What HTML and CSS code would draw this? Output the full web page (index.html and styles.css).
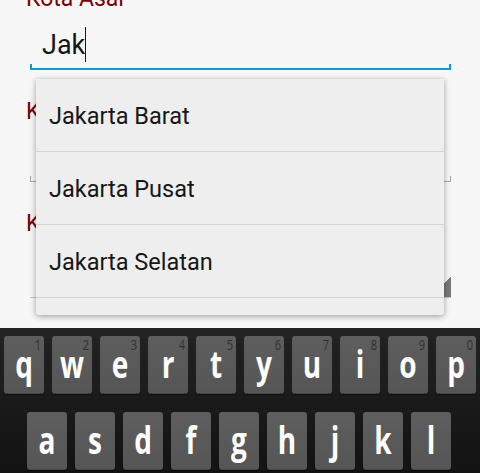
FILE: index.html
```html
<!DOCTYPE html>
<html>
<head>
<meta charset="utf-8">
<link rel="stylesheet" href="styles.css">
</head>
<body>
<div class="screen">
  <div class="form">
    <div class="field field-first">
      <div class="label">Kota Asal</div>
      <div class="input"><span class="value">Jak</span><span class="cursor"></span></div>
      <div class="line line-active"></div>
    </div>
    <div class="field">
      <div class="label">Kota Tujuan</div>
      <div class="input"></div>
      <div class="line"></div>
    </div>
    <div class="field">
      <div class="label">Kelas</div>
      <div class="spinner"></div>
    </div>
    <ul class="dropdown">
      <li class="item">Jakarta Barat</li>
      <li class="item">Jakarta Pusat</li>
      <li class="item">Jakarta Selatan</li>
      <li class="item">Jakarta Timur</li>
    </ul>
  </div>
  <div class="keyboard">
    <div class="row row-top">
      <div class="key"><span class="digit">1</span><span class="letter">q</span></div>
      <div class="key"><span class="digit">2</span><span class="letter">w</span></div>
      <div class="key"><span class="digit">3</span><span class="letter">e</span></div>
      <div class="key"><span class="digit">4</span><span class="letter">r</span></div>
      <div class="key"><span class="digit">5</span><span class="letter">t</span></div>
      <div class="key"><span class="digit">6</span><span class="letter">y</span></div>
      <div class="key"><span class="digit">7</span><span class="letter">u</span></div>
      <div class="key"><span class="digit">8</span><span class="letter">i</span></div>
      <div class="key"><span class="digit">9</span><span class="letter">o</span></div>
      <div class="key"><span class="digit">0</span><span class="letter">p</span></div>
    </div>
    <div class="row row-mid">
      <div class="key"><span class="digit"></span><span class="letter">a</span></div>
      <div class="key"><span class="digit"></span><span class="letter">s</span></div>
      <div class="key"><span class="digit"></span><span class="letter">d</span></div>
      <div class="key"><span class="digit"></span><span class="letter">f</span></div>
      <div class="key"><span class="digit"></span><span class="letter">g</span></div>
      <div class="key"><span class="digit"></span><span class="letter">h</span></div>
      <div class="key"><span class="digit"></span><span class="letter">j</span></div>
      <div class="key"><span class="digit"></span><span class="letter">k</span></div>
      <div class="key"><span class="digit"></span><span class="letter">l</span></div>
    </div>
  </div>
</div>
</body>
</html>
```
FILE: styles.css
```css
html, body {
  margin: 0;
  padding: 0;
  width: 480px;
  height: 473px;
  overflow: hidden;
  background: #f7f7f7;
}

.screen {
  display: flex;
  flex-direction: column;
  width: 480px;
  height: 473px;
}

.form {
  position: relative;
  flex: 1;
  overflow: hidden;
  padding: 0 29px 0 30px;
  font-family: Roboto, "Noto Sans", sans-serif;
}

.field {
  display: flex;
  flex-direction: column;
  margin-top: 28px;
}

.field-first {
  margin-top: -15px;
}

.label {
  margin-left: -4px;
  font-size: 23px;
  line-height: 27px;
  height: 27px;
  color: #7f0000;
  white-space: nowrap;
}

.field-first .input {
  margin-top: 14px;
}

.input {
  margin-top: 13px;
  height: 38px;
  padding-left: 12px;
  font-size: 27px;
  line-height: 38px;
  color: #151515;
  white-space: nowrap;
}

.cursor {
  display: inline-block;
  width: 1px;
  height: 35px;
  margin-top: 1px;
  vertical-align: top;
  background: #1a1a1a;
}

.line {
  box-sizing: border-box;
  height: 6px;
  border: 1px solid #a5a5a5;
  border-top: none;
}

.line-active {
  border: 2px solid #0a9bd0;
  border-top: none;
}

.spinner {
  height: 60px;
  border-bottom: 1px solid #c4c4c4;
  background: linear-gradient(to top left, #7a7a7a 50%, transparent 50%) no-repeat right bottom / 20px 20px;
}

.dropdown {
  position: absolute;
  left: 36px;
  top: 79px;
  width: 408px;
  height: 236px;
  margin: 0;
  padding: 0;
  list-style: none;
  overflow: hidden;
  background: #eeeeee;
  border-radius: 0 0 3px 3px;
  box-shadow: 0 2px 7px rgba(0, 0, 0, 0.28), 0 0 4px rgba(0, 0, 0, 0.12);
}

.item {
  height: 72px;
  overflow: hidden;
  padding-left: 13px;
  font-size: 23.5px;
  line-height: 74px;
  color: #161616;
  border-bottom: 1px solid #d4d4d4;
  white-space: nowrap;
}

.keyboard {
  flex: none;
  box-sizing: border-box;
  height: 145px;
  padding-top: 8px;
  display: flex;
  flex-direction: column;
  gap: 18px;
  background: linear-gradient(#232323, #121212);
  font-family: "Open Sans", "DejaVu Sans", sans-serif;
}

.row {
  display: flex;
  gap: 8px;
}

.row-top {
  padding-left: 4px;
}

.row-mid {
  padding-left: 27px;
}

.key {
  box-sizing: border-box;
  width: 40px;
  height: 58px;
  padding: 1px 3px 0;
  display: flex;
  flex-direction: column;
  border-radius: 3px;
  background: linear-gradient(#5e5e5e, #555555);
  box-shadow: 0 1px 0 rgba(0, 0, 0, 0.5), inset 0 -1px 0 rgba(0, 0, 0, 0.15);
}

.digit {
  align-self: flex-end;
  height: 12px;
  font-size: 11px;
  line-height: 12px;
  color: #2f2f2f;
  transform: scaleY(1.25);
  transform-origin: top;
}

.letter {
  margin-top: 3px;
  text-align: center;
  font-size: 28px;
  font-weight: 700;
  line-height: 30px;
  color: #ffffff;
  transform: scaleY(1.32);
  transform-origin: 50% 25.5px;
}
```
